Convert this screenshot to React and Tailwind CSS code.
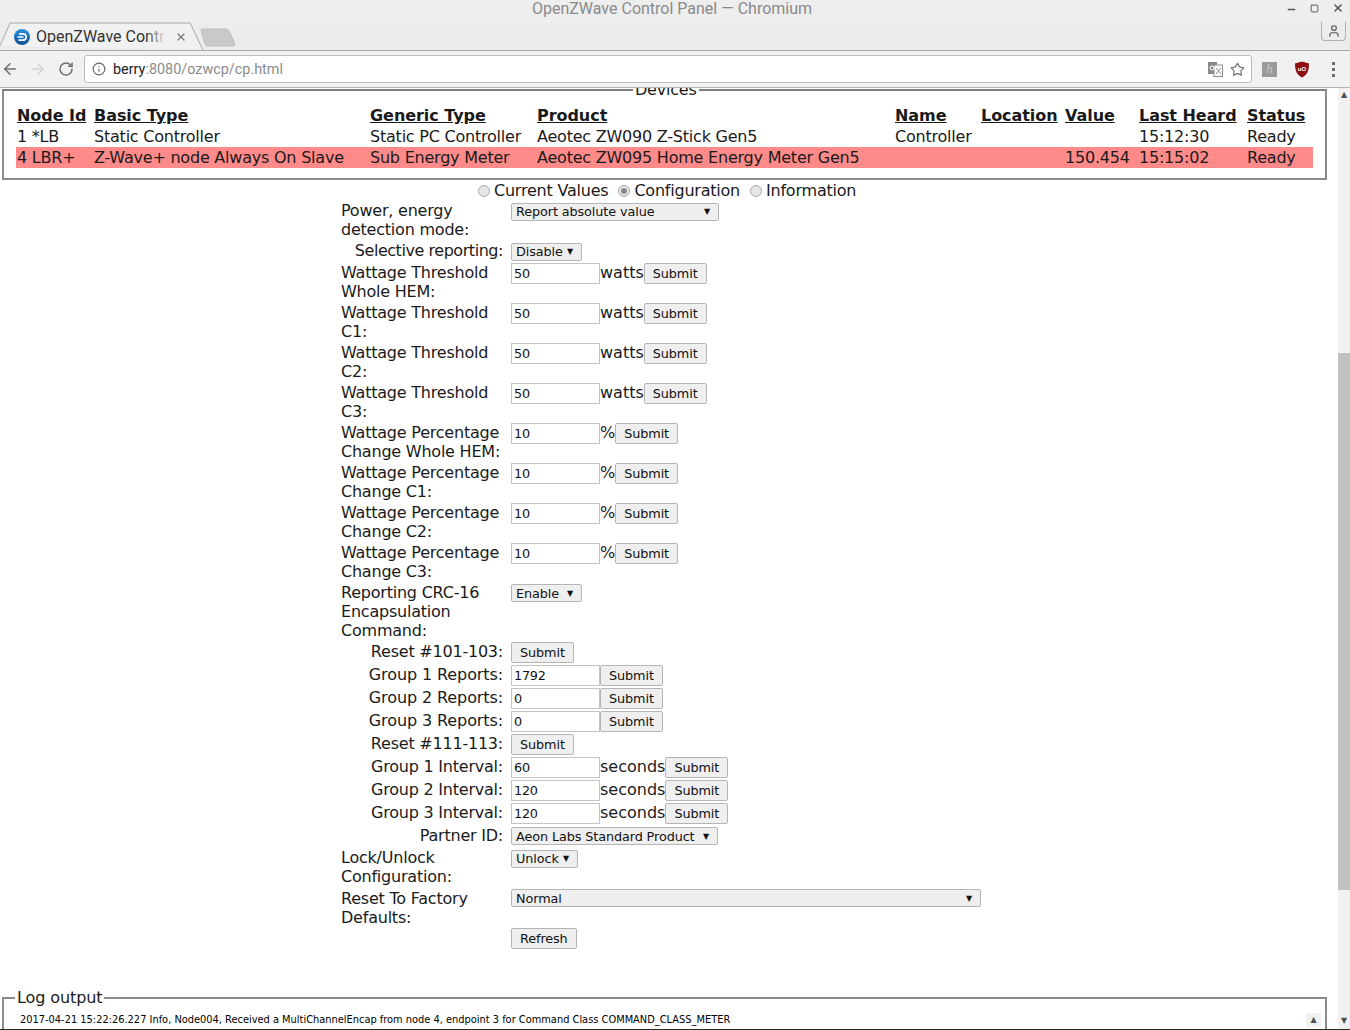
import React from 'react';
import { ArrowLeft, ArrowRight, RotateCw, Info, Star, X, Minus, Square, User } from 'lucide-react';

const nodes = [
    { id: '1 *LB', basic: 'Static Controller', generic: 'Static PC Controller', product: 'Aeotec ZW090 Z-Stick Gen5', name: 'Controller', value: '', heard: '15:12:30', status: 'Ready' },
    { id: '4 LBR+', basic: 'Z-Wave+ node Always On Slave', generic: 'Sub Energy Meter', product: 'Aeotec ZW095 Home Energy Meter Gen5', name: '', value: '150.454', heard: '15:15:02', status: 'Ready', selected: true },
];

function Submit({ label = 'Submit' }) {
    return (
        <button className="h-[21px] px-[8px] pt-[1px] bg-[#efefef] border border-[#b5b5b5] rounded-[2px] text-[12.8px] leading-none tracking-[-0.1px] text-[#111]">
            {label}
        </button>
    );
}

function Select({ label, className }) {
    return (
        <div className={`h-[18px] pl-[4px] pr-[8px] flex items-center justify-between whitespace-nowrap bg-[#efefef] border border-[#b5b5b5] rounded-[2px] text-[12.8px] tracking-[-0.1px] text-[#111] ${className}`}>
            <span>{label}</span>
            <span className="text-[8px] leading-none">▼</span>
        </div>
    );
}

function Input({ value }) {
    return (
        <div className="w-[89px] h-[21px] pl-[2px] flex items-center bg-white border border-[#c4c4c4] text-[12.8px] text-[#111] shrink-0">
            {value}
        </div>
    );
}

function Field({ value, unit }) {
    return (
        <div className="flex items-start">
            <Input value={value} />
            {unit && <span className="leading-[19px] tracking-normal">{unit}</span>}
            <Submit />
        </div>
    );
}

function Row({ label, right, h, labelClass = '', children }) {
    return (
        <div className={`flex items-start ${h}`}>
            <div className={`w-[165px] shrink-0 leading-[19px] ${labelClass} ${right ? 'text-right pr-[3px]' : ''}`}>{label}</div>
            <div className="pl-[5px] flex">{children}</div>
        </div>
    );
}

function Radio({ checked }) {
    return (
        <span className="w-[12px] h-[12px] rounded-full border border-[#a9a9a9] bg-[#e6e6e6] flex items-center justify-center">
            {checked && <span className="w-[6px] h-[6px] rounded-full bg-[#8b8b8b]" />}
        </span>
    );
}

export default function App() {
    return (
        <div className="h-[1030px] w-[1350px] overflow-hidden flex flex-col bg-white text-[16px] text-[#1a1a1a]">
            {/* Window title */}
            <div className="h-[22px] bg-[#eeeeee] flex items-center justify-between relative shrink-0">
                <div className="w-full pr-[6px] text-center text-[16px] leading-[18px] text-[#8a8a8a] font-['Roboto',sans-serif] -mt-[4px]">OpenZWave Control Panel — Chromium</div>
                <div className="absolute right-[6px] top-[1px] flex items-center gap-[13px] text-[#555]">
                    <Minus size={11} strokeWidth={3} className="mt-[3px]" />
                    <Square size={9} strokeWidth={2.5} />
                    <X size={12} strokeWidth={3} />
                </div>
            </div>

            {/* Tab strip */}
            <div className="h-[29px] bg-[#ececec] border-b border-[#a8a8a8] flex items-end relative shrink-0 font-['Roboto',sans-serif]">
                <div className="absolute left-0 top-0 h-[29px] w-[205px]">
                    <svg width="240" height="29" viewBox="0 0 240 29" className="absolute left-0 top-0">
                        <path d="M0 24 L10 1 L190 1 L203 28" fill="#f1f1f1" stroke="#a8a8a8" />
                        <path d="M201 8 Q201 7 203 7 L226 7 Q228 7 229 9 L235 22 Q235 24 233 24 L208 24 Q206 24 205 22 Z" fill="#c9c9c9" stroke="#bdbdbd" />
                    </svg>
                    <svg width="16" height="16" viewBox="0 0 16 16" className="absolute left-[14px] top-[7px]">
                        <defs>
                            <linearGradient id="fav" x1="0" y1="0" x2="0" y2="1">
                                <stop offset="0" stopColor="#2b8fe0" />
                                <stop offset="1" stopColor="#0b4f96" />
                            </linearGradient>
                        </defs>
                        <circle cx="8" cy="8" r="8" fill="url(#fav)" />
                        <path d="M5 4.8 H9 A3.2 3.2 0 0 1 9 11.2 H4.5 M3.5 8 H9.5" fill="none" stroke="#fff" strokeWidth="1.7" />
                    </svg>
                    <div className="absolute left-[36px] top-[5px] w-[130px] overflow-hidden whitespace-nowrap text-[16px] leading-[20px] text-[#333]">OpenZWave Contr</div>
                    <div className="absolute left-[146px] top-[5px] w-[20px] h-[20px] bg-gradient-to-r from-transparent to-[#f1f1f1]" />
                    <X size={12} strokeWidth={2.5} className="absolute left-[175px] top-[9px] text-[#777]" />
                </div>
                <div className="absolute right-[4px] top-0 w-[25px] h-[19px] border border-t-0 border-[#b0b0b0] rounded-b-[4px] flex items-center justify-center text-[#555]">
                    <User size={14} />
                </div>
            </div>

            {/* Address bar */}
            <div className="h-[37px] bg-[#f1f1f1] border-b border-[#b5b5b5] flex items-center shrink-0 font-['Roboto',sans-serif]">
                <ArrowLeft size={18} strokeWidth={2} className="ml-[1px] text-[#6e6e6e]" />
                <ArrowRight size={18} strokeWidth={2} className="ml-[10px] text-[#d2d2d2]" />
                <RotateCw size={16} strokeWidth={2.25} className="ml-[11px] text-[#6e6e6e]" />
                <div className="ml-[10px] w-[1168px] h-[28px] bg-white border border-[#bdbdbd] rounded-[3px] flex items-center">
                    <Info size={14} className="ml-[7px] text-[#666]" />
                    <span className="ml-[7px] mt-[2px] text-[14.4px] text-[#222]">berry</span>
                    <span className="mt-[2px] text-[14.4px] text-[#8b8b8b]">:8080/ozwcp/cp.html</span>
                    <svg width="15" height="15" viewBox="0 0 15 15" className="ml-auto">
                        <rect x="0" y="0" width="9" height="12" fill="#8a8a8a" />
                        <rect x="6" y="3" width="8.5" height="11.5" fill="#fff" stroke="#8a8a8a" />
                        <path d="M8 6 L13 12 M13 6 L8 12" stroke="#8a8a8a" />
                        <circle cx="4" cy="6" r="2" fill="none" stroke="#fff" />
                    </svg>
                    <Star size={15} strokeWidth={2} className="ml-[7px] mr-[6px] text-[#777]" />
                </div>
                <div className="ml-[10px] w-[15px] h-[15px] bg-[#9a9a9a] text-[#c9c9c9] flex items-center justify-center text-[13px] italic font-['Liberation_Serif',serif]">h</div>
                <svg width="16" height="17" viewBox="0 0 16 17" className="ml-[17px]">
                    <path d="M8 0.5 L15 2.5 C15 10 13 14 8 16.5 C3 14 1 10 1 2.5 Z" fill="#8f0f10" />
                    <text x="8" y="10" textAnchor="middle" fontSize="6" fontWeight="bold" fill="#fff" fontFamily="Liberation Sans">uO</text>
                </svg>
                <div className="ml-[22px] flex flex-col gap-[3px]">
                    <span className="w-[3px] h-[3px] bg-[#6e6e6e]" />
                    <span className="w-[3px] h-[3px] bg-[#6e6e6e]" />
                    <span className="w-[3px] h-[3px] bg-[#6e6e6e]" />
                </div>
            </div>

            {/* Page */}
            <div className="flex-1 min-h-0 flex font-['DejaVu_Sans',sans-serif] tracking-[-0.22px]">
                <div className="w-[1338px] overflow-hidden">
                    <fieldset className="ml-[2px] w-[1325px] h-[100px] -mt-[8px] border-2 border-[#8a8a8a] border-t-[#7f7f7f] relative">
                        <legend className="ml-[629px] px-[2px] leading-[19px]">Devices</legend>
                        <table className="absolute left-[12px] top-[6px] border-separate border-spacing-0 text-left leading-[21px] whitespace-nowrap">
                            <thead>
                                <tr className="underline tracking-[-0.05px]">
                                    <th className="w-[78px] pl-[1px] font-bold">Node Id</th>
                                    <th className="w-[276px] font-bold">Basic Type</th>
                                    <th className="w-[167px] font-bold">Generic Type</th>
                                    <th className="w-[358px] font-bold">Product</th>
                                    <th className="w-[86px] font-bold">Name</th>
                                    <th className="w-[84px] font-bold">Location</th>
                                    <th className="w-[74px] font-bold">Value</th>
                                    <th className="w-[108px] font-bold">Last Heard</th>
                                    <th className="w-[66px] font-bold">Status</th>
                                </tr>
                            </thead>
                            <tbody>
                                {nodes.map(n => (
                                    <tr key={n.id} className={n.selected ? 'bg-[#ff8a8a]' : ''}>
                                        <td className="pl-[1px]">{n.id}</td>
                                        <td>{n.basic}</td>
                                        <td>{n.generic}</td>
                                        <td>{n.product}</td>
                                        <td>{n.name}</td>
                                        <td></td>
                                        <td>{n.value}</td>
                                        <td>{n.heard}</td>
                                        <td>{n.status}</td>
                                    </tr>
                                ))}
                            </tbody>
                        </table>
                    </fieldset>

                    {/* Radios */}
                    <div className="h-[22px] pl-[478px] flex items-center">
                        <Radio />
                        <span className="ml-[4px]">Current Values</span>
                        <span className="ml-[10px]"><Radio checked /></span>
                        <span className="ml-[4px]">Configuration</span>
                        <span className="ml-[10px]"><Radio /></span>
                        <span className="ml-[4px]">Information</span>
                    </div>

                    {/* Configuration form */}
                    <div className="ml-[341px] w-[700px]">
                        <Row h="h-[39px]" labelClass="-mt-[1px]" label="Power, energy detection mode:"><Select label="Report absolute value" className="w-[208px] mt-[1px]" /></Row>
                        <Row h="h-[22px]" right labelClass="tracking-[-0.45px]" label="Selective reporting:"><Select label="Disable" className="w-[71px] mt-[2px]" /></Row>
                        <Row h="h-[40px]" label="Wattage Threshold Whole HEM:"><Field value="50" unit="watts" /></Row>
                        <Row h="h-[40px]" label="Wattage Threshold C1:"><Field value="50" unit="watts" /></Row>
                        <Row h="h-[40px]" label="Wattage Threshold C2:"><Field value="50" unit="watts" /></Row>
                        <Row h="h-[40px]" label="Wattage Threshold C3:"><Field value="50" unit="watts" /></Row>
                        <Row h="h-[40px]" label="Wattage Percentage Change Whole HEM:"><Field value="10" unit="%" /></Row>
                        <Row h="h-[40px]" label="Wattage Percentage Change C1:"><Field value="10" unit="%" /></Row>
                        <Row h="h-[40px]" label="Wattage Percentage Change C2:"><Field value="10" unit="%" /></Row>
                        <Row h="h-[40px]" label="Wattage Percentage Change C3:"><Field value="10" unit="%" /></Row>
                        <Row h="h-[59px]" label="Reporting CRC-16 Encapsulation Command:"><Select label="Enable" className="w-[71px] mt-[1px] pt-[2px]" /></Row>
                        <Row h="h-[23px]" right label="Reset #101-103:"><Submit /></Row>
                        <Row h="h-[23px]" right labelClass="tracking-[-0.1px]" label="Group 1 Reports:"><Field value="1792" /></Row>
                        <Row h="h-[23px]" right labelClass="tracking-[-0.1px]" label="Group 2 Reports:"><Field value="0" /></Row>
                        <Row h="h-[23px]" right labelClass="tracking-[-0.1px]" label="Group 3 Reports:"><Field value="0" /></Row>
                        <Row h="h-[23px]" right label="Reset #111-113:"><Submit /></Row>
                        <Row h="h-[23px]" right label="Group 1 Interval:"><Field value="60" unit="seconds" /></Row>
                        <Row h="h-[23px]" right label="Group 2 Interval:"><Field value="120" unit="seconds" /></Row>
                        <Row h="h-[23px]" right label="Group 3 Interval:"><Field value="120" unit="seconds" /></Row>
                        <Row h="h-[23px]" right label="Partner ID:"><Select label="Aeon Labs Standard Product" className="w-[207px] mt-[1px] pt-[2px]" /></Row>
                        <Row h="h-[40px]" labelClass="-mt-[1px]" label="Lock/Unlock Configuration:"><Select label="Unlock" className="w-[67px] mt-[1px]" /></Row>
                        <Row h="h-[39px]" label="Reset To Factory Defaults:"><Select label="Normal" className="w-[470px] pt-[2px]" /></Row>
                        <Row h="h-[22px]" label=""><Submit label="Refresh" /></Row>
                    </div>

                    {/* Log */}
                    <fieldset className="mt-[38px] ml-[2px] w-[1325px] h-[60px] border-2 border-[#8a8a8a] relative">
                        <legend className="ml-[11px] px-[2px] leading-[19px] tracking-[-0.1px]">Log output</legend>
                        <div className="pl-[16px] pt-[6px] text-[10.94px] leading-[14px] tracking-normal text-black font-['DejaVu_Sans_Condensed','DejaVu_Sans',sans-serif] whitespace-nowrap">
                            2017-04-21 15:22:26.227 Info, Node004, Received a MultiChannelEncap from node 4, endpoint 3 for Command Class COMMAND_CLASS_METER
                        </div>
                        <div className="absolute right-[4px] top-[6px] w-[15px] h-[14px] bg-[#f1f1f1] flex items-center justify-center text-[8px] text-[#505050]">▲</div>
                    </fieldset>
                </div>

                {/* Scrollbar */}
                <div className="w-[12px] bg-[#f1f1f1] flex flex-col items-center relative">
                    <span className="mt-[2px] text-[8px] leading-[10px] text-[#505050]">▲</span>
                    <div className="absolute left-0 top-[265px] w-[12px] h-[537px] bg-[#c1c1c1]" />
                    <span className="absolute bottom-[3px] text-[8px] leading-[10px] text-[#505050]">▼</span>
                </div>
            </div>

            {/* Desktop peeking out below the window */}
            <div className="h-[1px] bg-[#2b2a1e] shrink-0" />
        </div>
    );
}
